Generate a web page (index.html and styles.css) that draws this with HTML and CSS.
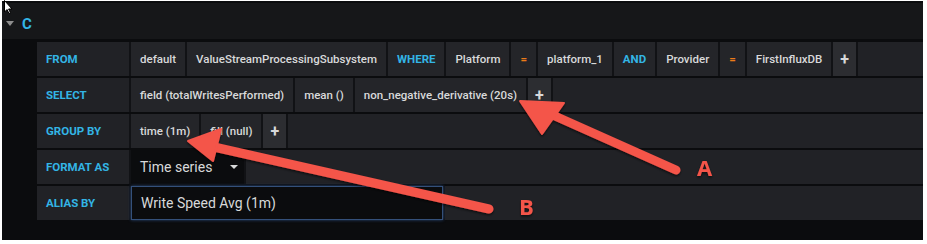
FILE: index.html
```html
<!DOCTYPE html>
<html lang="en">
<head>
    <meta charset="UTF-8">
    <title>Query C</title>
    <link rel="stylesheet" href="styles.css">
</head>
<body>
    <div class="panel">
        <div class="panel-head">
            <span class="caret"></span>
            <span class="ref">C</span>
        </div>
        <div class="query">
            <div class="row">
                <span class="lbl">FROM</span>
                <span class="seg">default</span>
                <span class="seg">ValueStreamProcessingSubsystem</span>
                <span class="seg kw">WHERE</span>
                <span class="seg">Platform</span>
                <span class="seg op">=</span>
                <span class="seg">platform_1</span>
                <span class="seg kw">AND</span>
                <span class="seg">Provider</span>
                <span class="seg op">=</span>
                <span class="seg">FirstInfluxDB</span>
                <span class="seg plus">+</span>
                <span class="grow"></span>
            </div>
            <div class="row">
                <span class="lbl">SELECT</span>
                <span class="seg">field (totalWritesPerformed)</span>
                <span class="seg">mean ()</span>
                <span class="seg">non_negative_derivative (20s)</span>
                <span class="seg plus">+</span>
                <span class="grow"></span>
            </div>
            <div class="row">
                <span class="lbl">GROUP BY</span>
                <span class="seg">time (1m)</span>
                <span class="seg">fill (null)</span>
                <span class="seg plus">+</span>
                <span class="grow"></span>
            </div>
            <div class="row">
                <span class="lbl">FORMAT AS</span>
                <span class="select">Time series <span class="drop"></span></span>
                <span class="grow"></span>
            </div>
            <div class="row">
                <span class="lbl">ALIAS BY</span>
                <span class="input">Write Speed Avg (1m)</span>
                <span class="grow"></span>
            </div>
        </div>
    </div>

    <!-- annotation arrows drawn over the screenshot -->
    <svg class="notes" width="927" height="244" viewBox="0 0 927 244">
        <defs>
            <filter id="sh" x="-10%" y="-10%" width="120%" height="130%">
                <feDropShadow dx="0" dy="1.5" stdDeviation="1.2" flood-color="#000" flood-opacity="0.6"/>
            </filter>
        </defs>
        <g filter="url(#sh)" fill="#f4544a" stroke="#f4544a">
            <line x1="546" y1="112" x2="676" y2="170" stroke-width="9" stroke-linecap="round"/>
            <polygon points="520,101 564,103 542,134" stroke-width="2" stroke-linejoin="round"/>
            <line x1="214" y1="147" x2="489" y2="209" stroke-width="9" stroke-linecap="round"/>
            <polygon points="188,141 221,129 213,161" stroke-width="2" stroke-linejoin="round"/>
            <text x="697" y="176" class="tag" stroke="none">A</text>
            <text x="519" y="215" class="tag" stroke="none">B</text>
        </g>
        <path class="cursor" d="M4.5 0.5 L4.5 12 L7 9.5 L9 13.5 L10.5 12.8 L8.6 9 L12 9 Z"/>
    </svg>
</body>
</html>
```

FILE: styles.css
```css
body {
    margin: 0;
    background: #fff;
    font-family: Roboto, "Noto Sans", sans-serif;
    position: relative;
    width: 927px;
    height: 244px;
    overflow: hidden;
}
.panel {
    margin: 1px 0 0 2px;
    width: 921px;
    height: 239px;
    background: #0b0c0e;
    display: flex;
    flex-direction: column;
}
.panel-head {
    margin-top: 2px;
    height: 38px;
    background: #161719;
    border-bottom: 2px solid #0b0c0e;
    display: flex;
    align-items: center;
    padding: 5px 0 0 4px;
    box-sizing: border-box;
}
.caret {
    width: 0;
    height: 0;
    border-left: 4px solid transparent;
    border-right: 4px solid transparent;
    border-top: 5px solid #8e8e8e;
    margin-right: 8px;
}
.ref {
    color: #33b5e5;
    font-weight: bold;
    font-size: 15px;
}
.query {
    padding: 1px 0 0 35px;
    display: flex;
    flex-direction: column;
    gap: 2px;
}
.row {
    display: flex;
    height: 34px;
    gap: 2px;
    background: #111215;
}
.row > span {
    display: flex;
    align-items: center;
    box-sizing: border-box;
    font-size: 11.5px;
    font-weight: 500;
    color: #d8d9da;
    white-space: nowrap;
}
.lbl {
    width: 92px;
    padding-left: 9px;
    background: #212226;
    color: #33b5e5 !important;
    font-weight: bold !important;
}
.seg {
    padding: 0 9px;
    background: #242529;
}
.kw {
    color: #33b5e5 !important;
    font-weight: bold !important;
}
.op {
    color: #eb7b18 !important;
    font-weight: bold !important;
    padding: 0 9px;
}
.plus {
    background: #2c2d31;
    font-size: 16px !important;
    font-weight: bold !important;
    padding: 0 7px;
}
.grow {
    flex: 1;
    background: #212226;
}
.select {
    width: 113px;
    padding-left: 9px;
    background: #0b0c0e;
    font-size: 14px !important;
    font-weight: 400 !important;
}
.drop {
    margin-left: 18px;
    width: 0;
    height: 0;
    border-left: 4px solid transparent;
    border-right: 4px solid transparent;
    border-top: 4px solid #d8d9da;
}
.input {
    width: 312px;
    padding-left: 9px;
    background: #0b0c0e;
    border: 1px solid #34507a;
    box-shadow: 0 0 3px #2a4a7a;
    font-size: 14px !important;
    font-weight: 400 !important;
}
.notes {
    position: absolute;
    left: 0;
    top: 0;
}
.tag {
    font-family: "Open Sans", Roboto, sans-serif;
    font-weight: bold;
    font-size: 22px;
}
.cursor {
    fill: #fff;
    stroke: #000;
    stroke-width: 1;
}
```
